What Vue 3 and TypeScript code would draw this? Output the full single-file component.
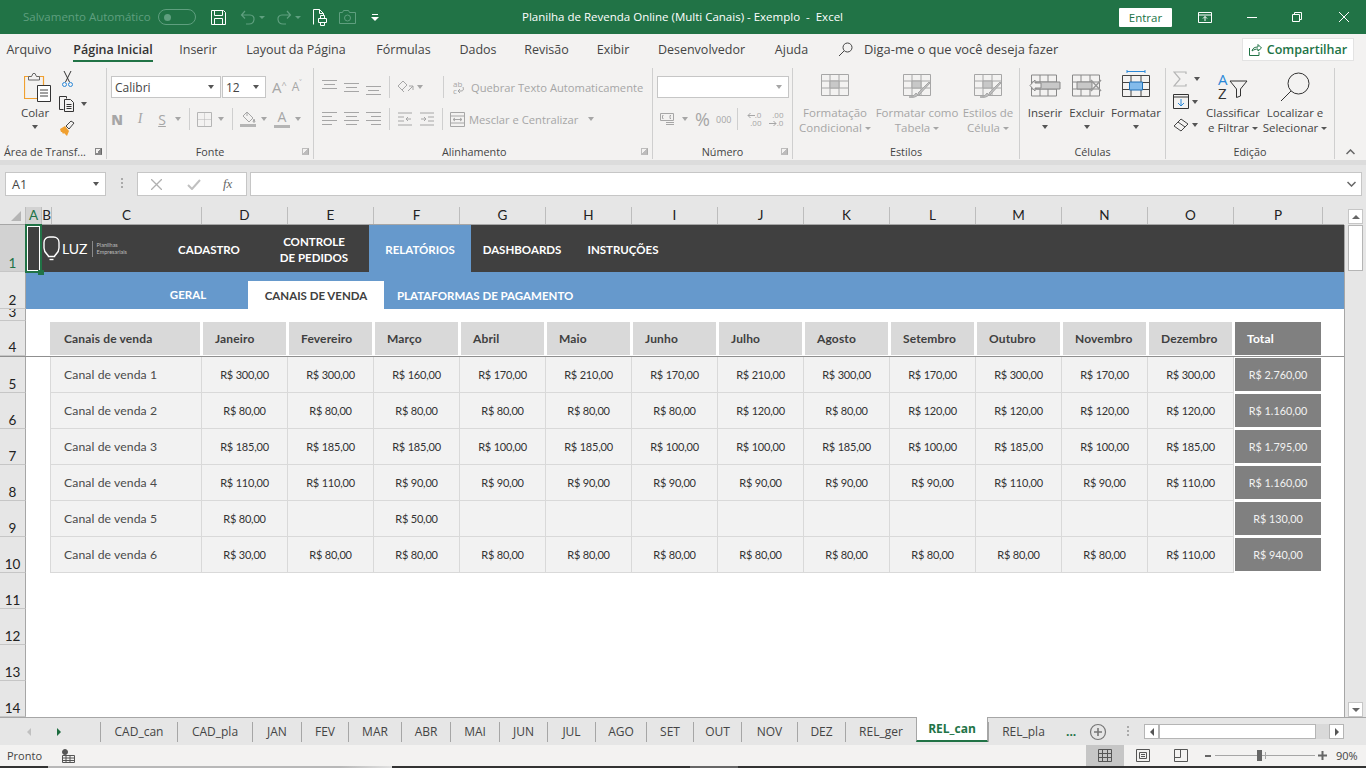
<template>
  <div class="excel">
    <!-- barra de titulo -->
    <header class="titlebar">
      <span class="autosave">Salvamento Automático</span>
      <span class="toggle"><i></i></span>
      <svg class="ml14" width="17" height="17" viewBox="0 0 17 17" fill="none" stroke="#fff"><path d="M1.500 1.500h12l2 2v12h-14z"/><path d="M4.500 1.500v5h8v-5M4.500 15.500v-6h8v6"/></svg>
      <svg class="ml13 dim" width="16" height="16" viewBox="0 0 16 16" fill="none" stroke="currentColor" stroke-width="1.200"><path d="M5 2 1.500 6 5 9.500M1.500 6H10c6 0 5 9-1 9H6"/></svg>
      <span class="caret-dim ml3"></span>
      <svg class="ml11 dim" width="16" height="16" viewBox="0 0 16 16" fill="none" stroke="currentColor" stroke-width="1.200"><path d="M11 2l3.500 4L11 9.500M14.500 6H6c-6 0-5 9 1 9h3"/></svg>
      <span class="caret-dim ml3"></span>
      <svg class="ml11" width="16" height="17" viewBox="0 0 16 17" fill="none" stroke="#fff"><path d="M1.500 15.500V.5h6l4 4V7M7.500.5v4h4"/><path d="M6.500 9.500h8v4h-8zM8.500 9.500v-3h4v3M8.500 13.500v3h4v-3" fill="#217346"/></svg>
      <svg class="ml11 dim" width="17" height="15" viewBox="0 0 17 15" fill="none" stroke="currentColor"><path d="M.5 2.500h3l1-2h5l1 2h6v11H.5z"/><circle cx="8.500" cy="8" r="3"/></svg>
      <svg class="ml15" width="9" height="9" viewBox="0 0 9 9" fill="#fff"><path d="M1 1h6v1H1zM0 4h8L4 8z"/></svg>
      <span class="doc-title">Planilha de Revenda Online (Multi Canais) - Exemplo&nbsp; -&nbsp; Excel</span>
      <button class="signin">Entrar</button>
      <svg class="ml26" width="14" height="11" viewBox="0 0 14 11" fill="none" stroke="#fff"><path d="M.5.5h13v10H.5zM.5 3h13"/><path d="M7 9V4.500M5 6.500l2-2 2 2"/></svg>
      <svg class="ml35" width="10" height="1" viewBox="0 0 10 1"><path d="M0 0h10v1H0z" fill="#fff"/></svg>
      <svg class="ml35" width="10" height="10" viewBox="0 0 10 10" fill="none" stroke="#fff"><path d="M.5 2.500h7v7h-7zM2.500 2.500v-2h7v7h-2"/></svg>
      <svg class="ml37" width="10" height="10" viewBox="0 0 10 10" stroke="#fff"><path d="M0 0l10 10M10 0 0 10"/></svg>
    </header>

    <!-- abas do ribbon -->
    <nav class="menu">
      <span
        v-for="tab in menuTabs"
        :key="tab.label"
        class="menu-tab"
        :class="{ active: tab.label === 'Página Inicial' }"
        :style="{ width: tab.width + 'px' }"
      >{{ tab.label }}</span>
      <svg class="search-ico" width="15" height="15" viewBox="0 0 15 15" fill="none" stroke="#444"><circle cx="9.500" cy="5.500" r="4.500"/><path d="M6 9 1 14"/></svg>
      <span class="tell-me">Diga-me o que você deseja fazer</span>
      <button class="share">
        <svg width="13" height="13" viewBox="0 0 13 13" fill="none" stroke="#217346"><path d="M.5 5v7.500h9.500V9M3 8c.5-3 3-4 6-4V1.500l3.500 3.500L9 8V6C7 6 5 6.500 3 8z"/></svg>
        Compartilhar
      </button>
    </nav>

    <section class="ribbon">
      <!-- area de transferencia -->
      <div class="group g-clip">
        <div class="group-body clip-body">
          <div class="big paste">
            <svg width="28" height="30" viewBox="0 0 28 30" fill="none">
              <path d="M.5 4.500h19v22H.5z" stroke="#f0a030" stroke-width="1.200"/>
              <path d="M4.500 8V4.500h3l1.500-3h2l1.500 3h3V8z" stroke="#666" fill="#f3f2f1"/>
              <path d="M13.500 13.500h13v16h-13z" fill="#fff" stroke="#333"/>
              <path d="M16 18h8M16 21h8M16 24h8" stroke="#444"/>
            </svg>
            <span class="big-label">Colar</span>
            <span class="caret"></span>
          </div>
          <div class="clip-tools">
            <svg class="ml3" width="11" height="17" viewBox="0 0 11 17" fill="none"><path d="M2 0l5.500 11M9 0 3.500 11" stroke="#333"/><circle cx="2.500" cy="13.500" r="2" stroke="#2b88d8"/><circle cx="8.500" cy="13.500" r="2" stroke="#2b88d8"/></svg>
            <div class="tool-line">
              <svg width="17" height="16" viewBox="0 0 17 16" fill="none" stroke="#333"><path d="M4.500 13.500H.5V.5h7v2"/><path d="M5.500 3.500h6l3 3v9h-9zM7.500 8.500h5M7.500 10.500h5M7.500 12.500h5"/></svg>
              <span class="caret ml5"></span>
            </div>
            <svg width="16" height="17" viewBox="0 0 16 17"><path d="M1 9l5-3 4 5-2 5-3-3-1 1-1-2-1 0z" fill="#f0a030"/><path d="M7 6l5-5 3 2-5 6z" fill="none" stroke="#444"/></svg>
          </div>
        </div>
        <div class="group-label clip-label">Área de Transf...</div>
        <span class="launcher"></span>
      </div>

      <!-- fonte -->
      <div class="group g-font">
        <div class="group-body stack">
          <div class="row-1 font-row1">
            <div class="select s-font"><span>Calibri</span><span class="caret"></span></div>
            <div class="select s-size"><span>12</span><span class="caret"></span></div>
            <span class="grow-a big-a ml6">A<sup>^</sup></span>
            <span class="grow-a small-a ml5">A<sup>˅</sup></span>
          </div>
          <div class="row-2 font-row2">
            <b class="fmt ml4 bold-n">N</b>
            <i class="fmt ml11 serif-i">I</i>
            <u class="fmt ml10">S</u>
            <span class="caret gray ml7"></span>
            <span class="vsep ml8"></span>
            <svg class="ml7" width="15" height="15" viewBox="0 0 15 15" fill="none" stroke="#b5b5b5"><path d="M.5.5h14v14H.5z"/><path d="M7.500.5v14M.5 7.500h14" stroke-dasharray="1 1"/></svg>
            <span class="caret gray ml6"></span>
            <span class="vsep ml8"></span>
            <span class="color-ico ml7">
              <svg width="16" height="12" viewBox="0 0 16 12" fill="none" stroke="#a6a6a6"><path d="M7 1l6 6-4 4-6-6zM7 1v4M14 8l1 3h-2z"/></svg>
              <em></em>
            </span>
            <span class="caret gray ml5"></span>
            <span class="color-ico ml7 a-color"><span>A</span><em></em></span>
            <span class="caret gray ml5"></span>
          </div>
        </div>
        <div class="group-label">Fonte</div>
        <span class="launcher dim-l"></span>
      </div>

      <!-- alinhamento -->
      <div class="group g-align">
        <div class="group-body stack">
          <div class="row-1 align-row">
            <svg v-for="(ic, i) in alignTop" :key="i" class="al-ico" :class="i ? 'ml7' : 'ml8'" width="15" height="16" viewBox="0 0 15 16" stroke="#a6a6a6"><path :d="ic"/></svg>
            <span class="vsep ml8"></span>
            <svg class="ml7" width="17" height="15" viewBox="0 0 17 15" fill="none" stroke="#a6a6a6"><path d="M1 6l5-5 4 4-5 5zM3 8l4 4M11 11l5-5M16 10V6h-4"/></svg>
            <span class="caret gray ml3"></span>
            <span class="vsep ml20"></span>
            <span class="wrap-ab ml9">
              <span>ab</span>
              <span class="wrap-line">c<svg width="7" height="7" viewBox="0 0 7 7" fill="none" stroke="#a6a6a6"><path d="M6 0c1 3 0 4-2 4H1M3 2 1 4l2 2"/></svg></span>
            </span>
            <span class="dis-text ml4">Quebrar Texto Automaticamente</span>
          </div>
          <div class="row-2 align-row">
            <svg v-for="(ic, i) in alignBottom" :key="i" class="al-ico" :class="i ? 'ml7' : 'ml8'" width="15" height="14" viewBox="0 0 15 14" stroke="#a6a6a6"><path :d="ic"/></svg>
            <span class="vsep ml8"></span>
            <svg class="ml8" width="14" height="14" viewBox="0 0 14 14" fill="none" stroke="#a6a6a6"><path d="M0 1h14M0 5h6M0 9h6M0 13h14M13 7H8M10 5 8 7l2 2"/></svg>
            <svg class="ml8" width="14" height="14" viewBox="0 0 14 14" fill="none" stroke="#a6a6a6"><path d="M0 1h14M8 5h6M8 9h6M0 13h14M1 7h5M4 5l2 2-2 2"/></svg>
            <span class="vsep ml8"></span>
            <svg class="ml7" width="15" height="15" viewBox="0 0 15 15" fill="none" stroke="#a6a6a6"><path d="M.5.500h14v14H.500zM.5 4h14M.5 11h14M3 7.500h9M5 6 3 7.500 5 9M10 6l2 1.500L10 9"/></svg>
            <span class="dis-text ml4">Mesclar e Centralizar</span>
            <span class="caret gray ml10"></span>
          </div>
        </div>
        <div class="group-label align-label">Alinhamento</div>
        <span class="launcher dim-l"></span>
      </div>

      <!-- numero -->
      <div class="group g-num">
        <div class="group-body stack">
          <div class="row-1 num-row1">
            <div class="select s-num"><span></span><span class="caret gray"></span></div>
          </div>
          <div class="row-2 num-row2">
            <svg class="ml7" width="15" height="14" viewBox="0 0 15 14" fill="none" stroke="#a6a6a6"><path d="M.5 1.500h13v7H.5zM6 12.500h8M6 10.500h8M3.500 3.500h-1v3h1M11 3.500h-1v3h1"/></svg>
            <span class="caret gray ml7"></span>
            <span class="percent ml7">%</span>
            <span class="thou ml5">000</span>
            <span class="vsep ml6"></span>
            <span class="dec ml7">
              <span class="dec-line"><svg width="8" height="7" viewBox="0 0 8 7" fill="none" stroke="#a6a6a6"><path d="M8 3.500H1M3.500 1 1 3.500 3.500 6"/></svg>.0</span>
              <span>.00</span>
            </span>
            <span class="dec ml6">
              <span>.00</span>
              <span class="dec-line"><svg width="8" height="7" viewBox="0 0 8 7" fill="none" stroke="#a6a6a6"><path d="M0 3.500h7M4.500 1 7 3.500 4.500 6"/></svg>.0</span>
            </span>
          </div>
        </div>
        <div class="group-label">Número</div>
        <span class="launcher dim-l"></span>
      </div>

      <!-- estilos -->
      <div class="group g-styles">
        <div class="group-body big-row">
          <div v-for="st in styleButtons" :key="st.top" class="big dis" :style="{ width: st.width + 'px' }">
            <svg width="28" height="24" viewBox="0 0 28 24" fill="none" stroke="#a6a6a6">
              <path d="M.5.500h27v21H.5zM.5 7h27M.5 14h27M9 .5v21M18 .5v21"/>
              <path d="M9 7h9v7H9z" fill="#c8c8c8"/>
              <path v-if="st.brush" d="M6 23c3 0 5-1 7-4l2 2c-2 2-5 3-9 2zM15 19 26 8l1 1-11 12z" fill="#c0c0c0"/>
            </svg>
            <span class="big-label l1">{{ st.top }}</span>
            <span class="big-label">{{ st.bottom }}<span class="caret gray ml3 mini"></span></span>
          </div>
        </div>
        <div class="group-label">Estilos</div>
      </div>

      <!-- celulas -->
      <div class="group g-cells">
        <div class="group-body big-row">
          <div class="big w42">
            <svg width="32" height="24" viewBox="0 0 32 24" fill="none" stroke="#888"><path d="M2.500 1h25v21h-25zM2.500 8h25M2.500 15h25M11 1v21M19 1v21"/><path d="M7 8h24v7H7z" fill="#c8c8c8"/><path d="M12 9H6V6L1 11.500 6 17v-3h6z" fill="#f3f2f1"/></svg>
            <span class="big-label l1">Inserir</span>
            <span class="caret l2c"></span>
          </div>
          <div class="big w42">
            <svg width="30" height="24" viewBox="0 0 30 24" fill="none" stroke="#888"><path d="M.5 1h27v21H.5zM.5 8h27M.5 15h27M9 1v21M18 1v21"/><path d="M5 8h15v7H5z" fill="#c8c8c8"/><path d="M19 6l10 11M29 6 19 17" stroke="#999" stroke-width="1.500"/></svg>
            <span class="big-label l1">Excluir</span>
            <span class="caret l2c"></span>
          </div>
          <div class="big w52 format-cell">
            <svg width="28" height="28" viewBox="0 0 28 28" fill="none" stroke="#444"><path d="M5 1.500h18M5 0v3M23 0v3" stroke="#2b88d8"/><path d="M.5 5.500h27v21H.5zM.5 12.500h27M.5 19.500h27M9 5.500v21M19 5.500v21"/><path d="M7.500 12h13v8h-13z" fill="#83bbeb" stroke="#1f6fb5"/></svg>
            <span class="big-label l1">Formatar</span>
            <span class="caret l2c"></span>
          </div>
        </div>
        <div class="group-label">Células</div>
      </div>

      <!-- edicao -->
      <div class="group g-edit">
        <div class="group-body edit-body">
          <div class="edit-tools">
            <div class="tool-line"><svg width="14" height="16" viewBox="0 0 14 16" fill="none" stroke="#b5b5b5" stroke-width="1.200"><path d="M13 3V1H1l6 7-6 7h12v-2"/></svg><span class="caret ml7"></span></div>
            <div class="tool-line"><svg width="16" height="15" viewBox="0 0 16 15" fill="none"><path d="M.5.500h15v14H.5z" stroke="#333"/><path d="M.5 3h15" stroke="#333"/><path d="M8 5v7M5 9l3 3 3-3" stroke="#2b88d8"/></svg><span class="caret ml3"></span></div>
            <div class="tool-line eraser"><svg width="16" height="14" viewBox="0 0 16 14" fill="none" stroke="#444"><path d="M1 8l7-7 7 5-7 7zM5 4l7 5"/></svg><span class="caret ml3"></span></div>
          </div>
          <div class="big w64 sort">
            <div class="sort-ico">
              <div class="sort-letters"><span class="sort-a">A</span><span class="sort-z">Z</span></div>
              <svg width="19" height="18" viewBox="0 0 19 18" fill="none" stroke="#333"><path d="M1 1h17l-6.500 8v7l-4 1.500V9z"/></svg>
            </div>
            <span class="big-label l1">Classificar</span>
            <span class="big-label">e Filtrar<span class="caret ml3 mini"></span></span>
          </div>
          <div class="big w64 find">
            <svg width="30" height="30" viewBox="0 0 30 30" fill="none" stroke="#333"><circle cx="18.500" cy="11.500" r="10.500"/><path d="M11 19 1 29"/></svg>
            <span class="big-label l1">Localizar e</span>
            <span class="big-label">Selecionar<span class="caret ml3 mini"></span></span>
          </div>
        </div>
        <div class="group-label">Edição</div>
      </div>

      <svg class="collapse" width="9" height="6" viewBox="0 0 9 6" fill="none" stroke="#666" stroke-width="1.500"><path d="M.5 5l4-4 4 4"/></svg>
    </section>
    <div class="ribbon-shadow"></div>

    <!-- barra de formulas -->
    <div class="formula-bar">
      <div class="name-box"><span>A1</span><span class="caret"></span></div>
      <span class="grip"></span>
      <div class="fx-box">
        <svg width="11" height="11" viewBox="0 0 11 11" stroke="#b0b0b0" stroke-width="1.300"><path d="M0 0l11 11M11 0 0 11"/></svg>
        <svg class="ml25" width="14" height="11" viewBox="0 0 14 11" fill="none" stroke="#c0c0c0" stroke-width="2"><path d="M1 6l4 4 8-9"/></svg>
        <i class="ml22">fx</i>
      </div>
      <div class="formula-input">
        <svg width="9" height="6" viewBox="0 0 9 6" fill="none" stroke="#666" stroke-width="1.500"><path d="M.5 1l4 4 4-4"/></svg>
      </div>
    </div>

    <!-- planilha -->
    <div class="workbook">
      <div class="sheet">
        <div class="grid col-heads">
          <div class="corner"><span></span></div>
          <div
            v-for="col in columns"
            :key="col"
            class="col-head"
            :class="{ sel: col === 'A' }"
          >{{ col }}</div>
          <div class="col-rest"></div>
        </div>

        <div class="grid row r1">
          <div class="row-head sel">1</div>
          <div class="banner">
            <div class="logo">
              <svg width="17" height="26" viewBox="0 0 17 26" fill="none" stroke="#fff" stroke-width="1.400"><path d="M5.500 20.500C5.500 18.500 1 17.500 1 12V6.500C1 3 3.500 1 6.500 1h4C13.500 1 16 3 16 6.500V12c0 5.500-4.500 6.500-4.500 8.500z"/><path d="M6.500 23.500h4"/></svg>
              <span class="logo-name">LUZ</span>
              <span class="logo-sep"></span>
              <span class="logo-sub">Planilhas<br>Empresariais</span>
            </div>
            <a class="nav w-a">CADASTRO</a>
            <a class="nav w-b">CONTROLE<br>DE PEDIDOS</a>
            <a class="nav w-c on">RELATÓRIOS</a>
            <a class="nav w-d">DASHBOARDS</a>
            <a class="nav w-e">INSTRUÇÕES</a>
          </div>
        </div>

        <div class="grid row r2">
          <div class="row-head">2</div>
          <div class="subnav">
            <a class="sub w-geral">GERAL</a>
            <a class="sub w-canais on">CANAIS DE VENDA</a>
            <a class="sub w-plat">PLATAFORMAS DE PAGAMENTO</a>
          </div>
        </div>

        <div class="grid row r3">
          <div class="row-head">3</div>
        </div>

        <div class="grid row r4">
          <div class="row-head">4</div>
          <div class="blank"></div>
          <div class="th first">Canais de venda</div>
          <div v-for="m in months" :key="m" class="th">{{ m }}</div>
          <div class="th total">Total</div>
          <div class="rest"></div>
        </div>

        <div v-for="(r, i) in rows" :key="r.name" class="grid row body">
          <div class="row-head">{{ i + 5 }}</div>
          <div class="blank"></div>
          <div class="td name">{{ r.name }}</div>
          <div v-for="(v, j) in r.values" :key="j" class="td">{{ v }}</div>
          <div class="td-total"><span>{{ r.total }}</span></div>
          <div class="rest"></div>
        </div>

        <div v-for="n in [11, 12, 13, 14]" :key="n" class="grid row body">
          <div class="row-head">{{ n }}</div>
        </div>

        <div class="cell-cursor"><span></span></div>
      </div>

      <div class="vscroll">
        <span class="sb-btn"><i class="tri-up"></i></span>
        <span class="sb-thumb"></span>
        <span class="sb-btn last"><i class="tri-down"></i></span>
      </div>
    </div>

    <!-- abas de planilhas -->
    <div class="tabs-bar">
      <div class="tab-arrows">
        <i class="tri-left"></i>
        <i class="tri-right"></i>
      </div>
      <span
        v-for="t in sheetTabs"
        :key="t.label"
        class="sheet-tab"
        :class="{ current: t.label === 'REL_can' }"
        :style="{ width: t.width + 'px' }"
      >{{ t.label }}</span>
      <span class="more">...</span>
      <svg class="add" width="18" height="18" viewBox="0 0 18 18" fill="none" stroke="#777"><circle cx="9" cy="9" r="7.500" stroke-width="1.200"/><path d="M9 5v8M5 9h8" stroke-width="1.600"/></svg>
      <span class="grip grip-tabs"></span>
      <div class="hscroll">
        <span class="hb"><i class="tri-l-s"></i></span>
        <span class="h-thumb"></span>
        <span class="h-track"></span>
        <span class="hb"><i class="tri-r-s"></i></span>
      </div>
    </div>

    <!-- status -->
    <footer class="status">
      <span class="ready">Pronto</span>
      <svg class="macro" width="13" height="14" viewBox="0 0 13 14" fill="none" stroke="#555"><circle cx="3" cy="3" r="2.500" fill="#555"/><path d="M.5 6.500h12v7H.5zM.5 9h12M.5 11.500h12M4 6.500v7M8 6.500v7"/></svg>
      <span class="view on">
        <svg width="14" height="13" viewBox="0 0 14 13" fill="none" stroke="#555"><path d="M.5.500h13v12H.500zM.5 4.500h13M.5 8.500h13M4.500.5v12M9.500.5v12"/></svg>
      </span>
      <span class="view">
        <svg width="14" height="13" viewBox="0 0 14 13" fill="none" stroke="#555"><path d="M.5.500h13v12H.500z"/><path d="M3.500 3.500h7v6h-7zM5 5.500h4M5 7.500h4"/></svg>
      </span>
      <span class="view">
        <svg width="14" height="13" viewBox="0 0 14 13" fill="none" stroke="#555"><path d="M.5.500h13v12H.500zM.5 8.500h6v-8M6.500 8.500"/></svg>
      </span>
      <span class="zoom-minus"></span>
      <div class="slider"><span class="tick"></span><span class="knob"></span></div>
      <svg class="zoom-plus" width="9" height="9" viewBox="0 0 9 9" stroke="#666" stroke-width="2"><path d="M4.500 0v9M0 4.500h9"/></svg>
      <span class="pct">90%</span>
    </footer>
    <div class="taskbar"><span class="tb-a"></span><span class="tb-b"></span><span class="tb-c"></span></div>
  </div>
</template>

<script setup lang="ts">
interface SalesRow {
  name: string
  values: string[]
  total: string
}

const menuTabs = [
  { label: 'Arquivo', width: 58 },
  { label: 'Página Inicial', width: 110 },
  { label: 'Inserir', width: 60 },
  { label: 'Layout da Página', width: 136 },
  { label: 'Fórmulas', width: 79 },
  { label: 'Dados', width: 70 },
  { label: 'Revisão', width: 67 },
  { label: 'Exibir', width: 66 },
  { label: 'Desenvolvedor', width: 111 },
  { label: 'Ajuda', width: 69 },
]

const alignTop = [
  'M0 1.500h15M2 5.500h11M0 9.500h15',
  'M0 4.500h15M2 8.500h11M0 12.500h15',
  'M0 7.500h15M2 11.500h11M0 15.500h15',
]

const alignBottom = [
  'M0 .5h15M0 4.500h10M0 8.500h15M0 12.500h10',
  'M0 .5h15M2 4.500h11M0 8.500h15M2 12.500h11',
  'M0 .5h15M5 4.500h10M0 8.500h15M5 12.500h10',
]

const styleButtons = [
  { top: 'Formatação', bottom: 'Condicional', width: 84, brush: false },
  { top: 'Formatar como', bottom: 'Tabela', width: 80, brush: true },
  { top: 'Estilos de', bottom: 'Célula', width: 62, brush: true },
]

const columns = ['A', 'B', 'C', 'D', 'E', 'F', 'G', 'H', 'I', 'J', 'K', 'L', 'M', 'N', 'O', 'P']

const months = [
  'Janeiro', 'Fevereiro', 'Março', 'Abril', 'Maio', 'Junho',
  'Julho', 'Agosto', 'Setembro', 'Outubro', 'Novembro', 'Dezembro',
]

const brl = (values: number[]) => values.map((v) => (v ? `R$ ${v},00` : ''))

const rows: SalesRow[] = [
  { name: 'Canal de venda 1', values: brl([300, 300, 160, 170, 210, 170, 210, 300, 170, 300, 170, 300]), total: 'R$ 2.760,00' },
  { name: 'Canal de venda 2', values: brl([80, 80, 80, 80, 80, 80, 120, 80, 120, 120, 120, 120]), total: 'R$ 1.160,00' },
  { name: 'Canal de venda 3', values: brl([185, 185, 185, 100, 185, 100, 100, 185, 100, 185, 100, 185]), total: 'R$ 1.795,00' },
  { name: 'Canal de venda 4', values: brl([110, 110, 90, 90, 90, 90, 90, 90, 90, 110, 90, 110]), total: 'R$ 1.160,00' },
  { name: 'Canal de venda 5', values: brl([80, 0, 50, 0, 0, 0, 0, 0, 0, 0, 0, 0]), total: 'R$ 130,00' },
  { name: 'Canal de venda 6', values: brl([30, 80, 80, 80, 80, 80, 80, 80, 80, 80, 80, 110]), total: 'R$ 940,00' },
]

const sheetTabs = [
  { label: 'CAD_can', width: 77 },
  { label: 'CAD_pla', width: 75 },
  { label: 'JAN', width: 49 },
  { label: 'FEV', width: 47 },
  { label: 'MAR', width: 53 },
  { label: 'ABR', width: 49 },
  { label: 'MAI', width: 49 },
  { label: 'JUN', width: 48 },
  { label: 'JUL', width: 48 },
  { label: 'AGO', width: 51 },
  { label: 'SET', width: 47 },
  { label: 'OUT', width: 48 },
  { label: 'NOV', width: 56 },
  { label: 'DEZ', width: 48 },
  { label: 'REL_ger', width: 71 },
  { label: 'REL_can', width: 72 },
  { label: 'REL_pla', width: 70 },
]
</script>

<style>
html,
body {
  margin: 0;
  background: #f3f2f1;
  overflow: hidden;
}
</style>

<style scoped>
.excel {
  width: 1366px;
  height: 768px;
  display: flex;
  flex-direction: column;
  overflow: hidden;
  font-family: "Open Sans", "Noto Sans", sans-serif;
  color: #444;
  background: #e6e6e6;
}

.ml3 { margin-left: 3px; }
.ml4 { margin-left: 4px; }
.ml5 { margin-left: 5px; }
.ml6 { margin-left: 6px; }
.ml7 { margin-left: 7px; }
.ml8 { margin-left: 8px; }
.ml9 { margin-left: 9px; }
.ml10 { margin-left: 10px; }
.ml11 { margin-left: 11px; }
.ml13 { margin-left: 13px; }
.ml14 { margin-left: 14px; }
.ml15 { margin-left: 15px; }
.ml20 { margin-left: 20px; }
.ml22 { margin-left: 22px; }
.ml25 { margin-left: 25px; }
.ml26 { margin-left: 26px; }
.ml35 { margin-left: 35px; }
.ml37 { margin-left: 37px; }

/* titulo */
.titlebar {
  height: 34px;
  flex: none;
  display: flex;
  align-items: center;
  padding-left: 23px;
  background: #217346;
  color: #fff;
}

.dim { color: #5f9f7f; }

.autosave {
  width: 128px;
  margin-top: -1px;
  font-size: 11.500px;
  color: #5f9f7f;
  white-space: nowrap;
}

.toggle {
  width: 38px;
  height: 16px;
  margin-left: 7px;
  box-sizing: border-box;
  border: 1px solid #5f9f7f;
  border-radius: 8px;
  display: flex;
  align-items: center;
  padding-left: 5px;
}

.toggle i {
  width: 7px;
  height: 7px;
  border-radius: 50%;
  background: #5f9f7f;
}

.caret-dim {
  width: 0;
  height: 0;
  border: 3px solid transparent;
  border-top-color: #5f9f7f;
  border-bottom: 0;
}

.doc-title {
  width: 320px;
  margin-left: 142px;
  margin-top: -1px;
  font-size: 11.500px;
  white-space: nowrap;
  text-align: center;
}

.signin {
  width: 53px;
  height: 19px;
  margin-left: 277px;
  padding: 0;
  border: 0;
  border-radius: 1px;
  background: #fff;
  color: #217346;
  font: 11.500px "Open Sans", sans-serif;
}

/* menu */
.menu {
  height: 28px;
  flex: none;
  display: flex;
  align-items: center;
  background: #f3f2f1;
  font-size: 12.500px;
}

.menu-tab {
  height: 28px;
  box-sizing: border-box;
  flex: none;
  display: flex;
  justify-content: center;
  align-items: center;
  padding-top: 2px;
  position: relative;
  white-space: nowrap;
}

.menu-tab.active {
  font-weight: 600;
  color: #333;
}

.menu-tab.active::after {
  content: "";
  position: absolute;
  left: 15px;
  right: 15px;
  bottom: 0;
  height: 2px;
  background: #217346;
}

.search-ico {
  margin: 2px 0 0 12px;
  flex: none;
}

.tell-me {
  width: 196px;
  margin-left: 11px;
  padding-top: 2px;
  font-size: 12.900px;
  white-space: nowrap;
}

.share {
  width: 112px;
  height: 23px;
  margin: 2px 0 0 182px;
  flex: none;
  padding: 0;
  display: flex;
  justify-content: center;
  align-items: center;
  gap: 5px;
  border: 1px solid #e3e3e3;
  background: #fff;
  color: #217346;
  font: 600 12.500px "Open Sans", sans-serif;
}

/* ribbon */
.ribbon {
  height: 92px;
  padding-top: 6px;
  flex: none;
  display: flex;
  position: relative;
  background: #f3f2f1;
}

.ribbon-shadow {
  height: 5px;
  flex: none;
  background: #dcdcdc;
}

.group {
  position: relative;
  flex: none;
  box-sizing: border-box;
  display: flex;
  flex-direction: column;
  border-right: 1px solid #cfcfcf;
  height: 91px;
}

.g-clip { width: 107px; }
.g-font { width: 207px; }
.g-align { width: 339px; }
.g-num { width: 140px; }
.g-styles { width: 227px; }
.g-cells { width: 146px; }
.g-edit { width: 169px; }

.group-body {
  height: 76px;
  flex: none;
  display: flex;
}

.stack {
  flex-direction: column;
  padding-top: 8px;
  box-sizing: border-box;
}

.row-1,
.row-2 {
  height: 22px;
  display: flex;
  align-items: center;
  flex: none;
}

.row-2 { margin-top: 10px; }

.group-label {
  height: 15px;
  font-size: 10.800px;
  line-height: 15px;
  text-align: center;
  white-space: nowrap;
}

.clip-label {
  text-align: left;
  padding-left: 4px;
}

.align-label {
  text-align: left;
  padding-left: 128px;
}

.launcher {
  position: absolute;
  right: 4px;
  bottom: 4px;
  width: 7px;
  height: 7px;
  border: 1px solid #888;
  border-right-color: #666;
  box-sizing: border-box;
  background: linear-gradient(135deg, transparent 50%, #888 50%);
}

.dim-l { opacity: .5; }

.caret {
  display: inline-block;
  width: 0;
  height: 0;
  border: 3.500px solid transparent;
  border-top: 4px solid #555;
  border-bottom: 0;
  flex: none;
}

.caret.gray { border-top-color: #a6a6a6; }

.caret.mini {
  border-width: 3px;
  border-bottom: 0;
  vertical-align: middle;
}

.big {
  display: flex;
  flex-direction: column;
  align-items: center;
  flex: none;
  padding-top: 6px;
  box-sizing: border-box;
  height: 76px;
  color: #444;
}

.big.dis { color: #a6a6a6; }
.big svg { flex: none; }

.big-label {
  font-size: 11.500px;
  line-height: 15px;
  white-space: nowrap;
}

.l1 { margin-top: 7px; }

.l2c { margin-top: 5px; }

.w42 { width: 42px; }
.w52 { width: 52px; }
.w64 { width: 64px; }

/* clipboard */
.clip-body {
  padding-left: 24px;
  box-sizing: border-box;
}

.paste {
  width: 28px;
  padding-top: 4px;
}

.paste .big-label {
  margin: 3px 6px 0 0;
}

.paste .caret {
  margin: 5px 6px 0 0;
}

.clip-tools {
  margin-left: 7px;
  margin-top: 3px;
  display: flex;
  flex-direction: column;
  gap: 8px;
}

.tool-line {
  display: flex;
  align-items: center;
}

/* font */
.font-row1 { padding-left: 4px; }

.select {
  height: 22px;
  box-sizing: border-box;
  display: flex;
  align-items: center;
  justify-content: space-between;
  padding: 0 6px 0 3px;
  border: 1px solid #c6c6c6;
  background: #fff;
  font-size: 12px;
  color: #444;
  flex: none;
}

.s-font {
  width: 110px;
  font-family: "Open Sans", sans-serif;
}

.s-size {
  width: 44px;
  margin-left: 1px;
}

.s-num { width: 132px; }

.num-row1 { padding-left: 4px; }

.grow-a {
  color: #a6a6a6;
  line-height: 1;
  white-space: nowrap;
}

.grow-a sup {
  font-size: 9px;
  vertical-align: 5px;
  line-height: 0;
}

.big-a { font-size: 15px; }
.small-a { font-size: 12px; }

.fmt {
  width: 12px;
  flex: none;
  text-align: center;
  font-size: 14px;
  color: #a6a6a6;
}

.bold-n { font-weight: 800; }

.serif-i { font-family: "Liberation Serif", serif; }

.vsep {
  width: 1px;
  height: 22px;
  flex: none;
  background: #cfcfcf;
}

.color-ico {
  width: 16px;
  flex: none;
  display: flex;
  flex-direction: column;
  align-items: center;
}

.color-ico em {
  width: 16px;
  height: 3px;
  background: #b5b5b5;
  margin-top: 1px;
}

.a-color span {
  font-size: 14px;
  line-height: 14px;
  color: #a6a6a6;
}

/* alinhamento */
.al-ico { flex: none; }

.wrap-ab {
  width: 14px;
  flex: none;
  display: flex;
  flex-direction: column;
  font-size: 8px;
  line-height: 7px;
  color: #a6a6a6;
}

.wrap-line {
  display: flex;
  align-items: center;
}

.dis-text {
  font-size: 11.200px;
  color: #a6a6a6;
  white-space: nowrap;
}

/* numero */
.percent {
  font-size: 18px;
  line-height: 1;
  width: 16px;
  color: #a6a6a6;
}

.thou {
  font-size: 9px;
  color: #a6a6a6;
}

.dec {
  width: 16px;
  flex: none;
  display: flex;
  flex-direction: column;
  align-items: flex-end;
  font-size: 8px;
  line-height: 8px;
  color: #a6a6a6;
  white-space: nowrap;
}

.dec-line {
  display: flex;
  align-items: center;
}

.g-cells .big-row { padding-left: 4px; }

.big-row { display: flex; }

.format-cell {
  padding-top: 2px;
  margin-left: 2px;
}

/* edicao */
.edit-body { padding-left: 7px; }

.edit-tools {
  width: 28px;
  flex: none;
  padding-top: 3px;
  display: flex;
  flex-direction: column;
  gap: 7px;
}

.eraser { margin-top: 2px; }

.sort { padding-top: 4px; }

.sort-ico {
  width: 30px;
  height: 28px;
  flex: none;
  display: flex;
  align-items: flex-start;
}

.sort-letters {
  width: 11px;
  flex: none;
  display: flex;
  flex-direction: column;
  font-size: 15px;
  line-height: 14px;
}

.sort-a { color: #2b88d8; }
.sort-z { color: #333; }

.sort-ico svg { margin-top: 8px; }

.sort .l1 { margin-top: 5px; }

.find {
  margin-left: -2px;
  padding-top: 4px;
}

.find .l1 { margin-top: 3px; }

.collapse {
  position: absolute;
  right: 11px;
  bottom: 5px;
}

/* formula */
.formula-bar {
  height: 42px;
  flex: none;
  box-sizing: border-box;
  padding: 7px 5px 0;
  display: flex;
  align-items: flex-start;
  background: #e6e6e6;
}

.name-box {
  width: 101px;
  height: 24px;
  flex: none;
  box-sizing: border-box;
  padding: 0 6px;
  display: flex;
  justify-content: space-between;
  align-items: center;
  border: 1px solid #c6c6c6;
  background: #fff;
  font-size: 12.500px;
  color: #444;
}

.grip {
  width: 2px;
  height: 11px;
  flex: none;
  margin: 6px 14px 0 15px;
  background: repeating-linear-gradient(#aaa 0 2px, transparent 2px 4px);
}

.fx-box {
  width: 110px;
  height: 24px;
  flex: none;
  box-sizing: border-box;
  padding-left: 13px;
  display: flex;
  align-items: center;
  border: 1px solid #c6c6c6;
  background: #fff;
}

.fx-box i {
  font: italic 13px "Liberation Serif", serif;
  color: #666;
}

.formula-input {
  width: 1112px;
  height: 24px;
  margin-left: 3px;
  flex: none;
  box-sizing: border-box;
  padding-right: 5px;
  display: flex;
  justify-content: flex-end;
  align-items: center;
  border: 1px solid #c6c6c6;
  background: #fff;
}

/* planilha */
.workbook {
  height: 510px;
  flex: none;
  display: flex;
  background: #e6e6e6;
}

.sheet {
  width: 1344px;
  flex: none;
  position: relative;
  font-family: Lato, "Open Sans", sans-serif;
}

.grid {
  display: grid;
  grid-template-columns: 26px 16px 10px 150px repeat(12, 86px) 89px 21px;
}

.col-heads {
  height: 18px;
  font-size: 13.500px;
  color: #222;
  border-bottom: 1px solid #a6a6a6;
  box-sizing: border-box;
}

.corner {
  position: relative;
  border-right: 1px solid #bdbdbd;
}

.corner span {
  position: absolute;
  right: 4px;
  bottom: 3px;
  border: 5.500px solid #b5b5b5;
  border-left-color: transparent;
  border-top-color: transparent;
}

.col-head {
  display: flex;
  justify-content: center;
  align-items: center;
  line-height: 1;
  box-sizing: border-box;
  border-right: 1px solid #bdbdbd;
  overflow: hidden;
}

.col-head.sel {
  background: #d2d2d2;
  color: #217346;
}

.row {
  background: #fff;
}

.r1 { height: 47px; }
.r2 { height: 37px; }
.r3 { height: 12px; }
.r4 {
  height: 36px;
  border-bottom: 1px solid #8f8f8f;
  box-sizing: border-box;
}
.body { height: 36px; }

.row-head {
  grid-column: 1;
  display: flex;
  justify-content: center;
  align-items: flex-end;
  box-sizing: border-box;
  background: #e6e6e6;
  border-right: 1px solid #a6a6a6;
  border-bottom: 1px solid #c6c6c6;
  font-size: 13.500px;
  line-height: 16px;
  color: #222;
  overflow: hidden;
}

.row-head.sel {
  background: #d2d2d2;
  color: #217346;
}

.banner {
  grid-column: 2 / -1;
  display: flex;
  background: #404040;
  color: #fff;
  font-weight: 700;
}

.logo {
  width: 133px;
  flex: none;
  display: flex;
  align-items: center;
  padding-left: 17px;
  box-sizing: border-box;
}

.logo-name {
  margin-left: 2px;
  font-size: 14px;
  font-weight: 400;
}

.logo-sep {
  width: 1px;
  height: 16px;
  margin: 0 4px;
  background: #8a8a8a;
}

.logo-sub {
  font-size: 5.500px;
  line-height: 7px;
  font-weight: 400;
  color: #bdbdbd;
  white-space: nowrap;
}

.nav {
  flex: none;
  display: flex;
  justify-content: center;
  align-items: center;
  box-sizing: border-box;
  padding-top: 2px;
  text-align: center;
  font-size: 11.500px;
  line-height: 16px;
}

.nav.on { background: #6699cc; }

.w-a { width: 100px; }
.w-b { width: 110px; }
.w-c { width: 102px; }
.w-d { width: 102px; }
.w-e { width: 100px; }

.subnav {
  grid-column: 2 / -1;
  display: flex;
  background: #6699cc;
}

.sub {
  flex: none;
  display: flex;
  align-items: center;
  justify-content: center;
  margin-top: 9px;
  font-size: 11.500px;
  font-weight: 700;
  color: #fff;
  white-space: nowrap;
}

.w-geral {
  width: 222px;
  padding-left: 102px;
  box-sizing: border-box;
  margin-top: 7px;
}

.w-canais {
  width: 136px;
  background: #fff;
  color: #404040;
}

.w-plat { margin-left: 13px; }

.blank { grid-column: 2 / 4; }

.th {
  margin: 1px 2px 1px 1px;
  padding-left: 12px;
  box-sizing: border-box;
  display: flex;
  align-items: center;
  background: #d9d9d9;
  font-size: 12px;
  letter-spacing: .15px;
  font-weight: 700;
  color: #404040;
}

.th.first {
  margin: 1px 2px 1px -2px;
  padding-left: 14px;
}

.th.total {
  background: #808080;
  color: #fff;
}

.td {
  box-sizing: border-box;
  display: flex;
  justify-content: center;
  align-items: center;
  background: #f2f2f2;
  border-right: 1px solid #d9d9d9;
  border-bottom: 1px solid #d9d9d9;
  font-size: 11px;
  letter-spacing: -.2px;
  color: #333;
}

.td.name {
  justify-content: flex-start;
  padding-left: 13px;
  border-left: 1px solid #d9d9d9;
  margin-left: -2px;
  font-size: 12.200px;
  letter-spacing: .1px;
  color: #4a4a4a;
}

.td-total {
  padding: 1px 2px 2px 1px;
  display: flex;
  box-sizing: border-box;
}

.td-total span {
  flex: 1;
  display: flex;
  justify-content: center;
  align-items: center;
  background: #808080;
  color: #f2f2f2;
  font-size: 10.800px;
}

.cell-cursor {
  position: absolute;
  left: 25px;
  top: 17px;
  width: 17px;
  height: 49px;
  box-sizing: border-box;
  border: 2px solid #217346;
}

.cell-cursor::before {
  content: "";
  position: absolute;
  inset: 0;
  border: 1px solid #fff;
}

.cell-cursor span {
  position: absolute;
  right: -4px;
  bottom: -4px;
  width: 6px;
  height: 5px;
  background: #217346;
}

/* scroll vertical */
.vscroll {
  width: 22px;
  flex: none;
  box-sizing: border-box;
  padding: 2px 3px 0 3px;
  display: flex;
  flex-direction: column;
  border-left: 1px solid #a6a6a6;
  margin-top: 18px;
  position: relative;
}

.sb-btn {
  height: 15px;
  flex: none;
  margin-top: -18px;
  display: flex;
  justify-content: center;
  align-items: center;
  background: #fff;
  border: 1px solid #c6c6c6;
  box-sizing: border-box;
}

.sb-btn.last {
  margin-top: auto;
}

.sb-thumb {
  height: 46px;
  flex: none;
  margin-top: 1px;
  background: #fff;
  border: 1px solid #b5b5b5;
  box-sizing: border-box;
}

.tri-up,
.tri-down {
  width: 0;
  height: 0;
  border: 4px solid transparent;
}

.tri-up {
  border-top: 0;
  border-bottom: 4px solid #666;
}

.tri-down {
  border-bottom: 0;
  border-top: 4px solid #666;
}

/* abas */
.tabs-bar {
  height: 28px;
  flex: none;
  display: flex;
  align-items: center;
  box-sizing: border-box;
  border-top: 1px solid #a6a6a6;
  background: #e6e6e6;
  font-family: "Open Sans", sans-serif;
  font-size: 12px;
}

.tab-arrows {
  width: 100px;
  flex: none;
  box-sizing: border-box;
  padding-left: 27px;
  display: flex;
  gap: 26px;
}

.tri-left,
.tri-right {
  width: 0;
  height: 0;
  border: 4px solid transparent;
}

.tri-left {
  border-left: 0;
  border-right: 4px solid #c0c0c0;
}

.tri-right {
  border-right: 0;
  border-left: 4px solid #1c6b3e;
}

.sheet-tab {
  flex: none;
  height: 20px;
  display: flex;
  justify-content: center;
  align-items: center;
  box-sizing: border-box;
  padding-bottom: 1px;
  border-left: 1px solid #a6a6a6;
  color: #444;
}

.sheet-tab.current {
  height: 25px;
  align-self: flex-start;
  margin-top: -1px;
  border-left: 1px solid #a6a6a6;
  border-right: 1px solid #a6a6a6;
  border-bottom: 2px solid #217346;
  background: #fff;
  color: #217346;
  font-weight: 700;
}

.more {
  width: 11px;
  margin-left: 8px;
  color: #217346;
  font-weight: 700;
  line-height: 1;
}

.add { margin-left: 12px; }

.grip-tabs {
  margin: 0 15px 0 20px;
}

.hscroll {
  width: 200px;
  height: 15px;
  flex: none;
  display: flex;
  background: #d9d9d9;
}

.hb {
  width: 15px;
  flex: none;
  display: flex;
  justify-content: center;
  align-items: center;
  background: #fff;
  border: 1px solid #b5b5b5;
  box-sizing: border-box;
}

.h-thumb {
  width: 157px;
  flex: none;
  background: #fff;
  border: 1px solid #b5b5b5;
  box-sizing: border-box;
}

.h-track { flex: 1; }

.tri-l-s,
.tri-r-s {
  width: 0;
  height: 0;
  border: 4px solid transparent;
}

.tri-l-s {
  border-left: 0;
  border-right: 4px solid #555;
}

.tri-r-s {
  border-right: 0;
  border-left: 4px solid #555;
}

/* status */
.status {
  height: 21px;
  flex: none;
  display: flex;
  align-items: center;
  background: #f3f2f1;
  font-size: 11px;
  color: #444;
}

.ready {
  width: 55px;
  margin-left: 7px;
}

.macro { flex: none; }

.view {
  width: 38px;
  height: 21px;
  flex: none;
  display: flex;
  justify-content: center;
  align-items: center;
}

.view.on {
  margin-left: 1011px;
  background: #c6c6c6;
}

.zoom-minus {
  width: 6px;
  height: 2px;
  margin-left: 5px;
  background: #666;
  flex: none;
}

.slider {
  width: 100px;
  height: 1px;
  margin-left: 4px;
  flex: none;
  position: relative;
  background: #a6a6a6;
}

.knob {
  position: absolute;
  left: 42px;
  top: -5px;
  width: 5px;
  height: 11px;
  background: #666;
}

.tick {
  position: absolute;
  left: 50px;
  top: -3px;
  width: 1px;
  height: 7px;
  background: #a6a6a6;
}

.zoom-plus { margin-left: 3px; flex: none; }

.pct {
  margin-left: 9px;
  white-space: nowrap;
}

.taskbar {
  height: 2px;
  flex: none;
  display: flex;
  background: #333;
}

.tb-a { width: 48px; }

.tb-b {
  width: 344px;
  background: linear-gradient(90deg, #b8b8b8 85%, #e0e0e0);
}

.tb-c {
  width: 48px;
  margin-left: 298px;
  background: #666;
}
</style>
